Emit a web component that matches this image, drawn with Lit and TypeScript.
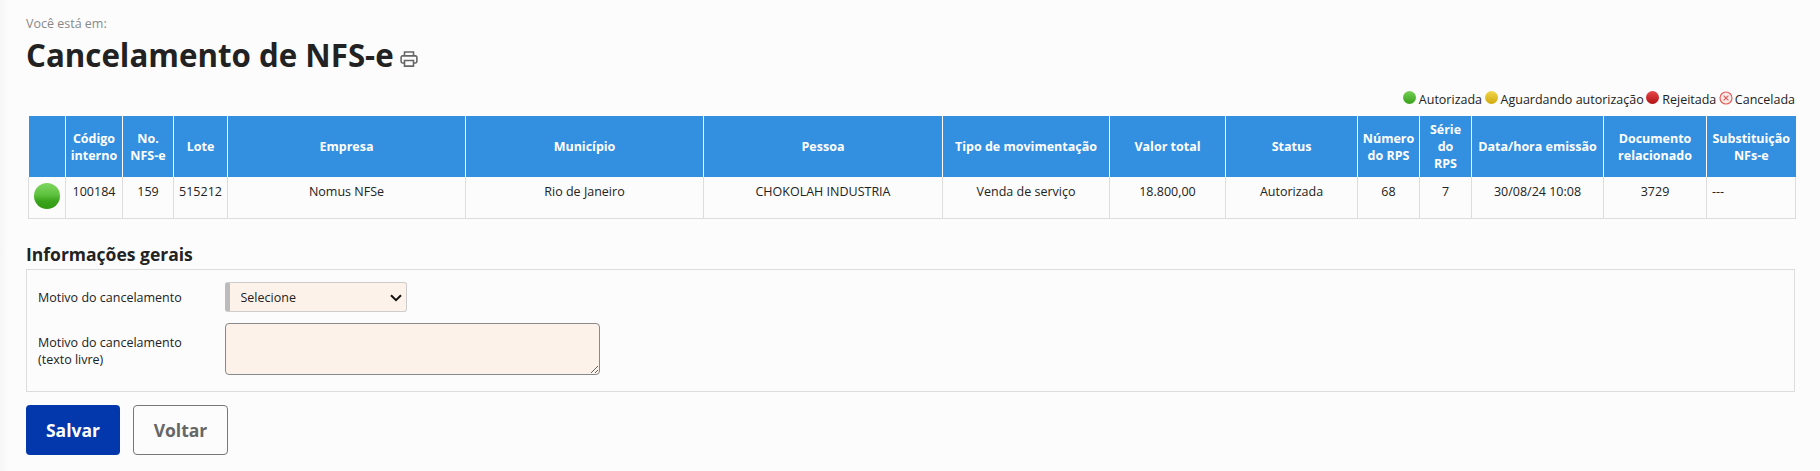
import { LitElement, html, css, svg } from "lit";
import { customElement } from "lit/decorators.js";

const cols = [
  { w: 37, h: html``, v: "" },
  { w: 57, h: html`Código<br />interno`, v: "100184" },
  { w: 51, h: html`No.<br />NFS-e`, v: "159" },
  { w: 54, h: html`Lote`, v: "515212" },
  { w: 238, h: html`Empresa`, v: "Nomus NFSe" },
  { w: 238, h: html`Município`, v: "Rio de Janeiro" },
  { w: 239, h: html`Pessoa`, v: "CHOKOLAH INDUSTRIA" },
  { w: 167, h: html`Tipo de movimentação`, v: "Venda de serviço" },
  { w: 116, h: html`Valor total`, v: "18.800,00" },
  { w: 132, h: html`Status`, v: "Autorizada" },
  { w: 62, h: html`Número<br />do RPS`, v: "68" },
  { w: 52, h: html`Série<br />do<br />RPS`, v: "7" },
  { w: 132, h: html`Data/hora emissão`, v: "30/08/24 10:08" },
  { w: 103, h: html`Documento<br />relacionado`, v: "3729" },
  { w: 89, h: html`Substituição<br />NFs-e`, v: "---" },
];

const printer = svg`<svg class="printer" viewBox="0 0 16 16" width="18" height="18" fill="none" stroke="#666" stroke-width="1.4"><path d="M4 5V1.7h8V5"/><path d="M4 11.5H2.2A1.2 1.2 0 0 1 1 10.3V6.4a1.2 1.2 0 0 1 1.2-1.2h11.6A1.2 1.2 0 0 1 15 6.4v3.9a1.2 1.2 0 0 1-1.2 1.2H12"/><path d="M4 9.3h8v5H4z"/></svg>`;

const cancelled = svg`<svg class="x" viewBox="0 0 14 14" width="14" height="14" fill="none" stroke="#e0605c"><circle cx="7" cy="7" r="6" stroke-width="1.2" fill="#fde9e7"/><path d="M4.6 4.6l4.8 4.8M9.4 4.6l-4.8 4.8" stroke-width="1.2"/></svg>`;

const chevron = svg`<svg class="chev" viewBox="0 0 12 8" width="12" height="8" fill="none" stroke="#111" stroke-width="2"><path d="M1 1.2l5 5 5-5"/></svg>`;

@customElement("app-root")
export class AppRoot extends LitElement {
  static styles = css`
    :host {
      display: block;
      width: 1820px;
      height: 471px;
      overflow: hidden;
      background: linear-gradient(90deg, #f6f6f6, #fcfcfc 8px);
      font-family: "Open Sans", sans-serif;
      font-size: 12.5px;
      color: #222;
    }
    .page {
      padding: 16px 25px 0 26px;
    }
    .crumb {
      line-height: 16px;
      color: #888;
    }
    .title-row {
      display: flex;
      align-items: center;
      gap: 6px;
      height: 40px;
      margin-top: 3px;
    }
    h1 {
      margin: 0;
      font-size: 31.25px;
      line-height: 40px;
      font-weight: 700;
      color: #222;
    }
    .printer {
      margin-top: 7px;
    }
    .legend {
      display: flex;
      justify-content: flex-end;
      align-items: center;
      gap: 2.5px;
      height: 16px;
      margin-top: 16px;
    }
    .legend-item {
      display: flex;
      align-items: center;
      gap: 3px;
    }
    .legend-item:last-child {
      gap: 2px;
    }
    .dot {
      display: block;
      width: 13px;
      height: 13px;
      margin-top: -3px;
      border-radius: 50%;
    }
    .green {
      background: linear-gradient(#74d055, #38a01a);
    }
    .yellow {
      background: linear-gradient(#f2d64c, #d0a90f);
    }
    .red {
      background: linear-gradient(#e8484a, #b01212);
    }
    .x {
      display: block;
      margin-top: -3px;
    }
    table {
      table-layout: fixed;
      border-collapse: collapse;
      margin: 9px 0 0 2px;
      width: 1767px;
    }
    th {
      height: 61px;
      padding: 0 2px;
      background: #3390e0;
      color: #fff;
      font-size: 12.5px;
      line-height: 17px;
      font-weight: 700;
      text-align: center;
      border-left: 1px solid #fff;
      border-right: 1px solid #fff;
      box-sizing: border-box;
    }
    th:first-child {
      border-left: 1px solid #fcfcfc;
    }
    th:last-child {
      border-right: none;
    }
    td {
      height: 41px;
      padding: 6px 2px 0;
      box-sizing: border-box;
      vertical-align: top;
      text-align: center;
      line-height: 18px;
      color: #222;
      border: 1px solid #ddd;
      border-top: none;
    }
    td.left {
      text-align: left;
      padding-left: 5px;
    }
    .bullet {
      display: block;
      width: 26px;
      height: 26px;
      margin: 0 auto;
      border-radius: 50%;
      background: linear-gradient(#7fd660 0%, #5fc23f 45%, #3aa31c 70%, #2f9a12 100%);
    }
    td.status {
      padding: 6px 0 0;
    }
    h2 {
      margin: 0;
      font-size: 17.5px;
      line-height: 22px;
      font-weight: 700;
      color: #222;
      padding-top: 24px;
    }
    .box {
      margin-top: 4px;
      box-sizing: border-box;
      width: 1769px;
      height: 123px;
      border: 1px solid #ddd;
      padding: 12px 12px 0 11px;
    }
    .field {
      display: grid;
      grid-template-columns: 187px auto;
      margin-bottom: 11px;
    }
    .field label {
      line-height: 17px;
      padding-top: 7px;
    }
    .field.tall label {
      padding-top: 11px;
    }
    .wrap {
      position: relative;
      display: block;
      width: 182px;
    }
    .field.tall .wrap {
      width: 375px;
    }
    .chev {
      position: absolute;
      right: 5px;
      top: 12px;
      pointer-events: none;
    }
    select {
      display: block;
      appearance: none;
      box-sizing: border-box;
      width: 182px;
      height: 30px;
      padding: 1px 4px 0 10.5px;
      font: 12.5px "Open Sans", sans-serif;
      color: #222;
      background: #fdf2e9;
      border: 1px solid #ccc;
      border-left: 5px solid #bbb;
      border-radius: 3px;
    }
    textarea {
      display: block;
      box-sizing: border-box;
      width: 375px;
      height: 52px;
      background: #fdf2e9;
      border: 1px solid #888;
      border-radius: 4px;
      margin: 0;
    }
    .buttons {
      display: flex;
      gap: 13px;
      margin-top: 13px;
    }
    button {
      box-sizing: border-box;
      height: 50px;
      border-radius: 4px;
      font: 700 17.5px "Open Sans", sans-serif;
      padding: 0;
    }
    .save {
      width: 94px;
      background: #0238ab;
      border: none;
      color: #fff;
    }
    .back {
      width: 95px;
      background: #fcfcfc;
      border: 1px solid #777;
      color: #666;
    }
  `;

  render() {
    return html`<div class="page">
      <div class="crumb">Você está em:</div>
      <div class="title-row"><h1>Cancelamento de NFS-e</h1>${printer}</div>
      <div class="legend">
        <span class="legend-item"><span class="dot green"></span>Autorizada</span>
        <span class="legend-item"><span class="dot yellow"></span>Aguardando autorização</span>
        <span class="legend-item"><span class="dot red"></span>Rejeitada</span>
        <span class="legend-item">${cancelled}Cancelada</span>
      </div>
      <table>
        <colgroup>${cols.map((c) => html`<col style="width:${c.w}px" />`)}</colgroup>
        <thead><tr>${cols.map((c) => html`<th>${c.h}</th>`)}</tr></thead>
        <tbody>
          <tr>
            <td class="status"><span class="bullet"></span></td>
            ${cols.slice(1).map((c) => html`<td class=${c.v === "---" ? "left" : ""}>${c.v}</td>`)}
          </tr>
        </tbody>
      </table>
      <h2>Informações gerais</h2>
      <div class="box">
        <div class="field">
          <label>Motivo do cancelamento</label>
          <span class="wrap"><select><option>Selecione</option></select>${chevron}</span>
        </div>
        <div class="field tall">
          <label>Motivo do cancelamento<br />(texto livre)</label>
          <span class="wrap"><textarea></textarea></span>
        </div>
      </div>
      <div class="buttons">
        <button class="save">Salvar</button>
        <button class="back">Voltar</button>
      </div>
    </div>`;
  }
}
